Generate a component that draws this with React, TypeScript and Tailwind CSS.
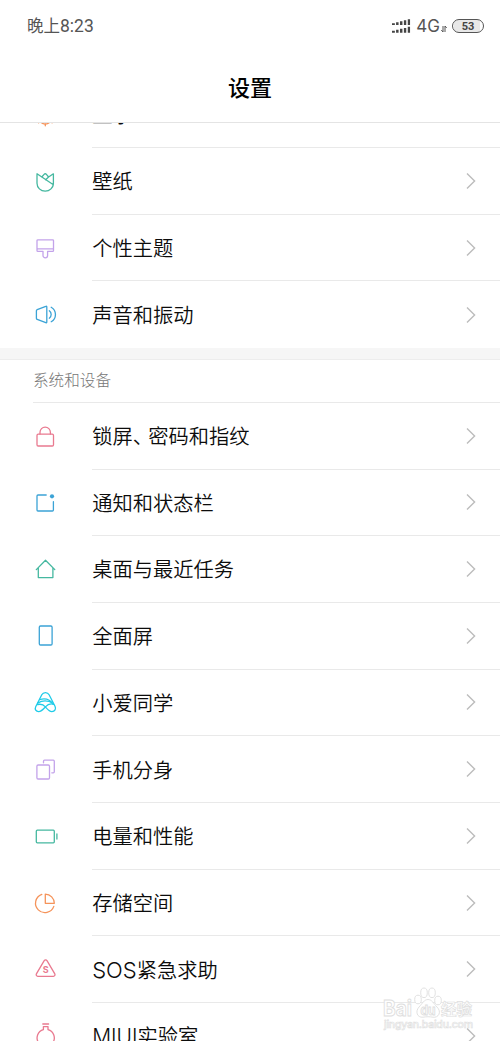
import type { ReactNode } from "react";

const COLORS = {
  teal: "#45b8a0",
  purple: "#c3a3ea",
  blue: "#3ba3d6",
  pink: "#e97a90",
  orange: "#f5935a",
  cyan: "#1fcbe8",
};

interface IconProps {
  color: string;
  children: ReactNode;
}

function Icon({ color, children }: IconProps) {
  return (
    <svg
      viewBox="0 0 26 26"
      className="mb-[1px] h-[26px] w-[26px] shrink-0 overflow-visible"
      fill="none"
      stroke={color}
      strokeWidth={1.3}
      strokeLinecap="round"
      strokeLinejoin="round"
    >
      {children}
    </svg>
  );
}

interface Item {
  label: ReactNode;
  icon: ReactNode;
}

const personalItems: Item[] = [
  {
    label: "显示",
    icon: (
      <Icon color={COLORS.orange}>
        <circle cx="13.3" cy="16.8" r="6.3" />
        <path d="M13.3 23v1.8M13.3 6.8v1.4M4.5 16.8h1M21.2 16.8h1M6.6 21.8l.9-.6M20 21.8l-.9-.6" />
      </Icon>
    ),
  },
  {
    label: "壁纸",
    icon: (
      <Icon color={COLORS.teal}>
        <path d="M5 5.8v9.4a8.2 8 0 0 0 16.4 0V5.8l-4.8 3.2M5 5.8l16.4 11M9.8 9l2.3-2.7a1.5 1.5 0 0 1 2.3 0l2.2 2.7-3 2.7" />
      </Icon>
    ),
  },
  {
    label: "个性主题",
    icon: (
      <Icon color={COLORS.purple}>
        <path d="M5 5.7a.9.9 0 0 1 .9-.9h14.7a.9.9 0 0 1 .9.9v9.7a.9.9 0 0 1-.9.9h-5v4.2a2.3 2.3 0 0 1-4.6 0v-4.2H5.9a.9.9 0 0 1-.9-.9zM5 13.8h16.5" />
      </Icon>
    ),
  },
  {
    label: "声音和振动",
    icon: (
      <Icon color={COLORS.blue}>
        <path d="M5.2 8.6l8.6-3.3a.7.7 0 0 1 1 .7v15a.7.7 0 0 1-1 .7l-8.6-3.3a1.2 1.2 0 0 1-.8-1.2V9.8a1.2 1.2 0 0 1 .8-1.2zM17.3 9.8a4.6 4.6 0 0 1 0 7.4M19.2 6.2a8.4 8.4 0 0 1 0 14.6" />
      </Icon>
    ),
  },
];

const systemItems: Item[] = [
  {
    label: (
      <>
        锁屏<span className="mr-[5.5px] [font-feature-settings:'halt']">、</span>
        密码和指纹
      </>
    ),
    icon: (
      <Icon color={COLORS.pink}>
        <rect x="5" y="11.2" width="16.5" height="11.8" rx="1.2" />
        <path d="M8 11V9.3a5.2 5.2 0 0 1 10.4 0V11" />
      </Icon>
    ),
  },
  {
    label: "通知和状态栏",
    icon: (
      <Icon color={COLORS.blue}>
        <path d="M14.2 6H6a1 1 0 0 0-1 1v14a1 1 0 0 0 1 1h14.4a1 1 0 0 0 1-1v-8.3" />
        <circle cx="20" cy="7.3" r="2.1" fill={COLORS.blue} stroke="none" />
      </Icon>
    ),
  },
  {
    label: "桌面与最近任务",
    icon: (
      <Icon color={COLORS.teal}>
        <path d="M4.3 13.6l9.2-9.4 9.3 9.4M6.3 12v9.6h14.6V12" />
      </Icon>
    ),
  },
  {
    label: "全面屏",
    icon: (
      <Icon color={COLORS.blue}>
        <rect x="7.3" y="3" width="12.8" height="19" rx="1.2" />
      </Icon>
    ),
  },
  {
    label: "小爱同学",
    icon: (
      <Icon color={COLORS.cyan}>
        <path d="M13.4 17.9C11.2 20.4 9.4 22.6 6.6 22.6c-2.6 0-4.1-2.3-2.9-4.8L9.8 5.8c1.5-3 5.8-3 7.3 0l5.9 11.4c1.4 2.8-.2 5.4-3.1 5.4-2.7 0-4.4-2.3-6.5-4.7-1.7-2-3.9-3.2-7.6-2.4M13.4 17.9c2-2.2 4.8-3.8 8.3-2.5" />
        <path d="M7.7 10.6c5-1.6 10.3-.2 13.9 4.7M5.9 13.9c4.5-2.5 10.3-2.6 15.2.6" />
      </Icon>
    ),
  },
  {
    label: "手机分身",
    icon: (
      <Icon color={COLORS.purple}>
        <rect x="4.9" y="9" width="12.6" height="14" rx="1.2" />
        <path d="M11.5 6.8V5.2a1 1 0 0 1 1-1h8.8a1 1 0 0 1 1 1v10.6a1 1 0 0 1-1 1h-1.5" />
      </Icon>
    ),
  },
  {
    label: "电量和性能",
    icon: (
      <Icon color={COLORS.teal}>
        <rect x="4.3" y="7.2" width="18" height="12.6" rx="1" />
        <path d="M24.9 10.9v5.2" />
      </Icon>
    ),
  },
  {
    label: "存储空间",
    icon: (
      <Icon color={COLORS.orange}>
        <path d="M9.8 4.4a9.4 9.4 0 1 0 12 12" />
        <path d="M13.3 4.1a9.2 9.2 0 0 1 9 9.2h-9z" />
      </Icon>
    ),
  },
  {
    label: (
      <>
        <span className="text-[22px] leading-[0] font-light">SOS</span>紧急求助
      </>
    ),
    icon: (
      <Icon color={COLORS.pink}>
        <path d="M12.2 4.7a1.6 1.6 0 0 1 2.8 0l7.8 13.2a1.6 1.6 0 0 1-1.4 2.4H5.8a1.6 1.6 0 0 1-1.4-2.4z" />
        <text
          x="13.7"
          y="17"
          textAnchor="middle"
          fill={COLORS.pink}
          stroke="none"
          className="font-['Inter',sans-serif] text-[9px] font-bold"
        >
          S
        </text>
      </Icon>
    ),
  },
  {
    label: (
      <>
        <span className="text-[21px] leading-[0] font-light">MIUI</span>实验室
      </>
    ),
    icon: (
      <Icon color={COLORS.pink}>
        <path d="M10.8 1h5.8M11.4 3.6h4.6v3a8.6 8.6 0 1 1-4.6 0z" />
      </Icon>
    ),
  },
];

function Row({ label, icon, last }: Item & { last?: boolean }) {
  return (
    <div className="flex h-[66.7px] pl-8">
      <div className="flex w-[60.2px] shrink-0 items-center">{icon}</div>
      <div
        className={
          last
            ? "flex flex-1 items-center justify-between pr-6"
            : "flex flex-1 items-center justify-between border-b border-[#e9e9e9] pr-6"
        }
      >
        <span className="pt-[3px] text-[20.25px] leading-none font-[350] whitespace-nowrap text-[#0c0c0c]">
          {label}
        </span>
        <svg
          viewBox="0 0 10 18"
          className="h-[18px] w-[10px]"
          fill="none"
          stroke="#bcbcbc"
          strokeWidth={1.4}
        >
          <path d="M1 1.5L8.6 9 1 16.5" />
        </svg>
      </div>
    </div>
  );
}

function StatusBar() {
  return (
    <div className="flex h-[53px] items-center justify-between pr-[16px] pl-[27px] text-[#555]">
      <span className="pt-px font-['Roboto','Noto_Sans_CJK_SC',sans-serif] text-[16.5px] leading-none">
        晚上<span className="text-[17.5px]">8:23</span>
      </span>
      <div className="flex items-center">
        <svg viewBox="0 0 20 16" className="mb-px h-4 w-[19px]" fill="#444">
          <path d="M0 5h3v2H0zM4.3 4h2.6v3H4.3zM8.4 3H11v4H8.4zM12.5 2H15v5h-2.5zM16.6.8h2.4V7h-2.4zM0 13h3v2H0zM4.3 12h2.6v3H4.3zM8.4 11H11v4H8.4zM12.5 10H15v5h-2.5zM16.6 8.8h2.4V15h-2.4z" />
        </svg>
        <span className="ml-[5px] text-[17px] leading-none">4G</span>
        <svg
          viewBox="0 0 6 8"
          className="mt-1 ml-px h-2 w-1.5"
          fill="none"
          stroke="#555"
          strokeWidth={1}
        >
          <path d="M.3 5l1.7 2V1M5.7 3L4 1v6" />
        </svg>
        <div className="mb-px ml-[5px] flex h-[14px] w-[32px] items-center justify-center rounded-full border-[1.5px] border-[#555] bg-[linear-gradient(90deg,#fff_0_1px,#e8e8e8_1px_90%,#fff_90%)] font-['Roboto',sans-serif] text-[11px] leading-none font-bold text-[#444]">
          53
        </div>
      </div>
    </div>
  );
}

function Watermark() {
  return (
    <div className="absolute top-[986px] left-[383px] w-[92px] text-white">
      <svg
        viewBox="0 0 92 46"
        className="h-[46px] w-[92px] overflow-visible"
        fill="#fff"
        stroke="#dedede"
        strokeWidth={0.9}
      >
        <text
          x="0"
          y="30"
          className="font-['Inter',sans-serif] text-[21px] font-bold"
          textLength="29"
          lengthAdjust="spacingAndGlyphs"
        >
          Bai
        </text>
        <ellipse cx="35" cy="13.5" rx="3.3" ry="4.3" />
        <ellipse cx="41" cy="6.8" rx="3.3" ry="4.8" />
        <ellipse cx="49" cy="6.8" rx="3.3" ry="4.8" />
        <ellipse cx="55" cy="14.5" rx="3.3" ry="4.3" />
        <path d="M45 13.5c4 0 5.5 4 9 7.5 5 5 1.5 11-4 10.2-4-.6-6-.6-10 0-6 .6-8-5.7-4-10.2 3.5-3.5 5-7.5 9-7.5z" />
        <text
          x="37.5"
          y="28.5"
          className="font-['Inter',sans-serif] text-[13px] font-bold"
          textLength="15"
          lengthAdjust="spacingAndGlyphs"
        >
          du
        </text>
        <text
          x="58"
          y="28.5"
          strokeWidth={0.7}
          className="font-['Noto_Sans_CJK_SC',sans-serif] text-[15.5px] font-bold"
        >
          经验
        </text>
        <text
          x="1"
          y="41.5"
          strokeWidth={0.6}
          className="font-['Inter',sans-serif] text-[10.5px] font-medium"
          textLength="89"
        >
          jingyan.baidu.com
        </text>
      </svg>
    </div>
  );
}

export default function App() {
  return (
    <div className="relative flex h-[1041px] w-[500px] flex-col overflow-hidden bg-white font-['Inter','Noto_Sans_CJK_SC',sans-serif]">
      <header className="h-[123px] shrink-0 border-b border-[#e4e4e4]">
        <StatusBar />
        <h1 className="flex h-[69px] items-center justify-center text-[22px] leading-none font-medium text-black">
          设置
        </h1>
      </header>

      {/* List is scrolled, so the first row is cut by the header */}
      <main className="min-h-0 flex-1 overflow-hidden">
        <div className="-mt-[41.6px]">
          {personalItems.map((item, i) => (
            <Row key={i} {...item} last={i === personalItems.length - 1} />
          ))}
          <div className="h-[11.5px] border-b border-[#ededed] bg-[#f6f6f6]" />
          <div className="ml-[33px] flex h-[43.2px] items-center border-b border-[#e9e9e9] pt-px text-[15.6px] leading-none font-light text-[#777]">
            系统和设备
          </div>
          {systemItems.map((item, i) => (
            <Row key={i} {...item} />
          ))}
        </div>
      </main>

      <Watermark />
    </div>
  );
}
